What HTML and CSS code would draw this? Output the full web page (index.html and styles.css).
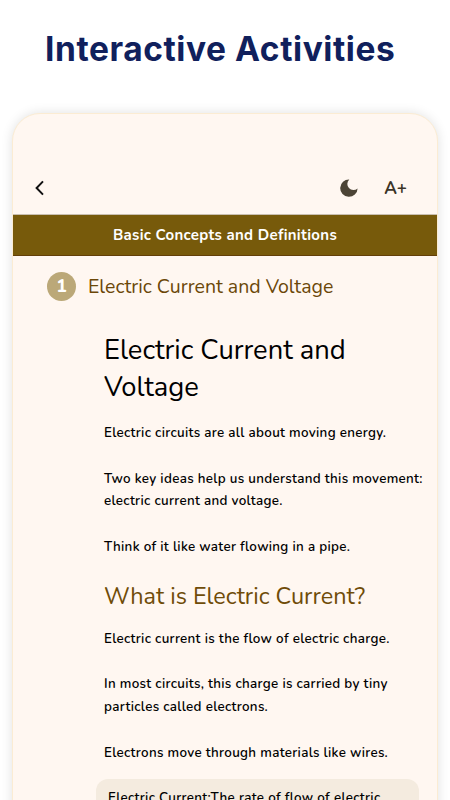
FILE: index.html
```html
<!DOCTYPE html>
<html lang="en">
<head>
  <meta charset="UTF-8">
  <meta name="viewport" content="width=device-width, initial-scale=1.0">
  <title>Interactive Activities</title>
  <link rel="stylesheet" href="styles.css">
</head>
<body>
  <h1 class="page-title">Interactive Activities</h1>

  <div class="phone">
    <div class="toolbar">
      <svg class="back" width="12" height="16" viewBox="0 0 12 16">
        <path d="M9 1.4L2.6 8 9 14.6" fill="none" stroke="#111" stroke-width="2"/>
      </svg>
      <svg class="moon" width="18" height="18" viewBox="0 0 18 18">
        <path d="M9.3.4A8.7 8.7 0 1 0 17.6 9.4 6.1 6.1 0 0 1 9.3.4z" fill="#4c4436"/>
      </svg>
      <span class="font-size">A+</span>
    </div>

    <div class="banner"><span>Basic Concepts and Definitions</span></div>

    <div class="step">
      <span class="step-number">1</span>
      <span class="step-title">Electric Current and Voltage</span>
    </div>

    <div class="content">
      <h2>Electric Current and<br>Voltage</h2>
      <p>Electric circuits are all about moving energy.</p>
      <p>Two key ideas help us understand this movement:<br>electric current and voltage.</p>
      <p>Think of it like water flowing in a pipe.</p>
      <h3>What is Electric Current?</h3>
      <p>Electric current is the flow of electric charge.</p>
      <p>In most circuits, this charge is carried by tiny<br>particles called electrons.</p>
      <p>Electrons move through materials like wires.</p>
      <div class="note">Electric Current:The rate of flow of electric</div>
    </div>
  </div>
</body>
</html>
```
FILE: styles.css
```css
* {
  box-sizing: border-box;
}
body {
  margin: 0;
  height: 800px;
  overflow: hidden;
  background-color: #fff;
  font-family: Nunito, Lato, sans-serif;
  color: #000;
}
.page-title {
  margin: 0;
  height: 113px;
  padding: 28px 0 0 45px;
  font-family: Inter, sans-serif;
  font-size: 33.5px;
  line-height: 43px;
  font-weight: 650;
  letter-spacing: 0.57px;
  white-space: nowrap;
  color: #10205c;
}
.phone {
  width: 426px;
  height: 720px;
  margin-left: 12px;
  background-color: #fff7f1;
  border: 1px solid #fbecd3;
  border-radius: 28px 28px 0 0;
  box-shadow: 0 0 12px rgba(0, 0, 0, 0.12);
  white-space: nowrap;
}
.toolbar {
  height: 100px;
  padding: 48px 30px 0 21px;
  display: flex;
  align-items: center;
}
.moon {
  margin-left: auto;
  margin-right: 26px;
}
.font-size {
  padding-top: 1px;
  font-size: 17px;
  font-weight: 700;
  line-height: 24px;
  color: #3b3428;
}
.banner {
  height: 42px;
  border-top: 1px solid #c9bfb0;
  border-bottom: 1px solid #633f08;
  background-color: #775a0b;
  color: #fff;
  font-size: 15px;
  font-weight: 700;
  line-height: 40px;
  letter-spacing: 0.3px;
  text-align: center;
}
.step {
  height: 60px;
  padding-left: 34px;
  display: flex;
  align-items: center;
  gap: 12px;
}
.step-number {
  width: 29px;
  height: 29px;
  border-radius: 50%;
  background-color: #bba878;
  color: #fff;
  font-size: 17px;
  font-weight: 800;
  line-height: 29px;
  text-align: center;
}
.step-title {
  font-size: 19.5px;
  color: #6b4708;
}
.content {
  padding: 16px 18px 0 91px;
}
h2 {
  margin: 0 0 16px;
  font-size: 27.3px;
  font-weight: 400;
  line-height: 37px;
}
p {
  margin: 0 0 22.8px;
  font-size: 13.4px;
  font-weight: 600;
  line-height: 22.8px;
  letter-spacing: 0.31px;
}
h3 {
  margin: -2px 0 16px;
  font-size: 23.4px;
  font-weight: 400;
  line-height: 32px;
  color: #6f4c08;
}
.note {
  height: 60px;
  margin: -8.6px 0 0 -8px;
  padding: 8px 12px;
  border-radius: 12px;
  background-color: #f4ebdf;
  font-size: 13.4px;
  font-weight: 600;
  line-height: 22.8px;
  letter-spacing: 0.31px;
}
```
